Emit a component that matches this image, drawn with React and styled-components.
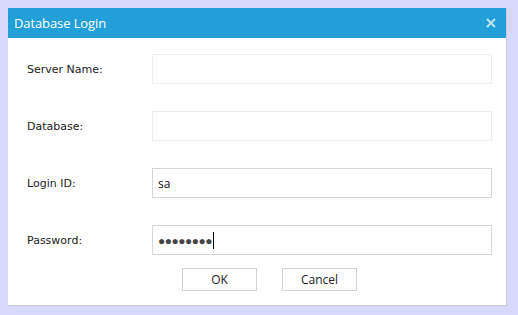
import React from "react";
import styled, { createGlobalStyle } from "styled-components";

const GlobalStyle = createGlobalStyle`
  html, body {
    margin: 0;
    background: #d8d8fc;
  }
  body {
    padding: 8px;
    font-family: "Open Sans", "Noto Sans", sans-serif;
  }
`;

const Dialog = styled.div`
  width: 498px;
  background: #ffffff;
  box-shadow: 1px 1px 0 #c9c9d6;
`;

const TitleBar = styled.div`
  height: 30px;
  background: #229fd8;
  display: flex;
  align-items: center;
  justify-content: space-between;
  padding: 0 8px 0 6px;
`;

const Title = styled.span`
  color: #ffffff;
  font-size: 13px;
  letter-spacing: -0.1px;
`;

const CloseButton = styled.button`
  border: none;
  background: transparent;
  padding: 0;
  width: 14px;
  height: 14px;
  display: flex;
  align-items: center;
  justify-content: center;
  cursor: pointer;
`;

const Body = styled.div`
  padding: 16px 14px 14px 19px;
`;

const Form = styled.div`
  display: grid;
  grid-template-columns: 125px 340px;
  row-gap: 27px;
  align-items: center;
`;

const Label = styled.label`
  font-family: "DejaVu Sans", Tahoma, sans-serif;
  font-size: 11px;
  color: #222222;
`;

const Field = styled.div`
  height: 30px;
  box-sizing: border-box;
  border: 1px solid ${(p) => (p.disabled ? "#eeeeee" : "#d6d6d6")};
  background: #ffffff;
  display: flex;
  align-items: center;
  padding-left: 5px;
  font-size: 12px;
  color: #111111;
`;

const Dots = styled.span`
  font-size: 12px;
  letter-spacing: -0.5px;
  color: #444444;
`;

const Caret = styled.span`
  display: inline-block;
  width: 1px;
  height: 17px;
  background: #000000;
  margin-left: 1px;
`;

const Buttons = styled.div`
  display: flex;
  gap: 25px;
  padding-left: 155px;
  margin-top: 13px;
`;

const Button = styled.button`
  width: 75px;
  height: 23px;
  box-sizing: border-box;
  border: 1px solid #d4d4d4;
  background: #ffffff;
  font-family: "Open Sans", "Noto Sans", sans-serif;
  font-size: 12px;
  color: #222222;
  padding: 0;
`;

const App = () => {
  return (
    <>
      <GlobalStyle />
      <Dialog>
        <TitleBar>
          <Title>Database Login</Title>
          <CloseButton>
            <svg width="10" height="10" viewBox="0 0 10 10">
              <path d="M1 1 L9 9 M9 1 L1 9" stroke="#bfe3f5" strokeWidth="2" />
            </svg>
          </CloseButton>
        </TitleBar>
        <Body>
          <Form>
            <Label>Server Name:</Label>
            <Field disabled />
            <Label>Database:</Label>
            <Field disabled />
            <Label>Login ID:</Label>
            <Field>sa</Field>
            <Label>Password:</Label>
            <Field>
              <Dots>●●●●●●●●</Dots>
              <Caret />
            </Field>
          </Form>
          <Buttons>
            <Button>OK</Button>
            <Button>Cancel</Button>
          </Buttons>
        </Body>
      </Dialog>
    </>
  );
};

export default App;
